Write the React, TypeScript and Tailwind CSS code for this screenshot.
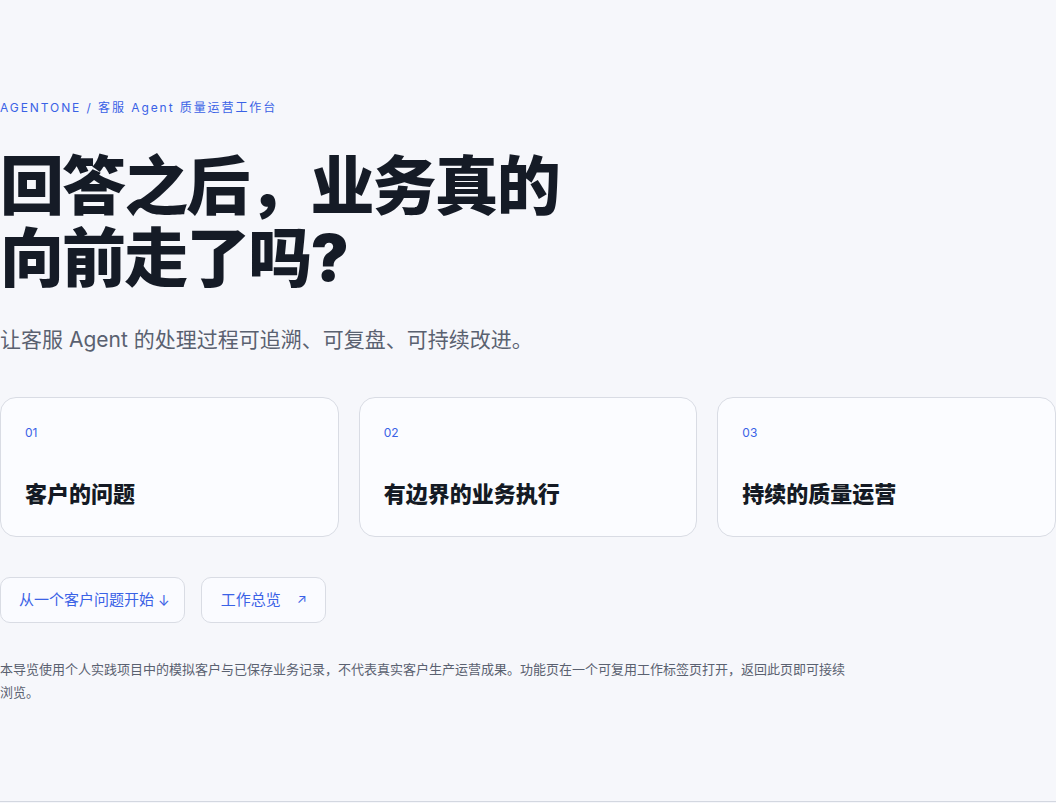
import React from "react";

const font = { fontFamily: '"Inter", "Noto Sans CJK SC", sans-serif' };

function Card({ n, title }: { n: string; title: string }) {
  return (
    <div className="h-[140px] rounded-[16px] border border-[#d9dce4] bg-[#fbfcff] px-6 pt-[26px]">
      <div className="text-[12px] leading-[18px] text-[#3a62e6]">{n}</div>
      <div className="mt-[37px] text-[22px] font-black leading-[30px] text-[#141a24]">{title}</div>
    </div>
  );
}

export default function App() {
  return (
    <div className="min-h-[803px] bg-[#f6f7fb]" style={font}>
      <div className="h-[802px] border-b border-[#d3d7e0] pt-[99px]">
        <div className="text-[12px] leading-[18px] tracking-[0.16em] text-[#3a62e6]">
          AGENTONE / 客服 Agent 质量运营工作台
        </div>
        <h1 className="mt-[33px] text-[64px] font-black leading-[72px] tracking-[-0.03em] text-[#151b26]">
          回答之后，业务真的
          <br />
          向前走了吗?
        </h1>
        <p className="mt-[31px] text-[21px] leading-[30px] text-[#5a6170]">
          让客服 Agent 的处理过程可追溯、可复盘、可持续改进。
        </p>
        <div className="mt-[42px] grid grid-cols-3 gap-5">
          <Card n="01" title="客户的问题" />
          <Card n="02" title="有边界的业务执行" />
          <Card n="03" title="持续的质量运营" />
        </div>
        <div className="mt-[40px] flex gap-4">
          <button className="flex h-[46px] items-center gap-[4px] rounded-[10px] border border-[#d9dce4] bg-[#fafbff] pl-[18px] pr-[14px] text-[15px] text-[#3a62e6]">
            <span>从一个客户问题开始</span>
            <span className="text-[14px]">↓</span>
          </button>
          <button className="flex h-[46px] items-center gap-[16px] rounded-[10px] border border-[#d9dce4] bg-[#fafbff] pl-[19px] pr-[18px] text-[15px] text-[#3a62e6]">
            <span>工作总览</span>
            <span className="text-[13px]">↗</span>
          </button>
        </div>
        <p className="mt-[35px] max-w-[850px] text-[13px] leading-[23px] text-[#5a6170]">
          本导览使用个人实践项目中的模拟客户与已保存业务记录，不代表真实客户生产运营成果。功能页在一个可复用工作标签页打开，返回此页即可接续浏览。
        </p>
      </div>
    </div>
  );
}
